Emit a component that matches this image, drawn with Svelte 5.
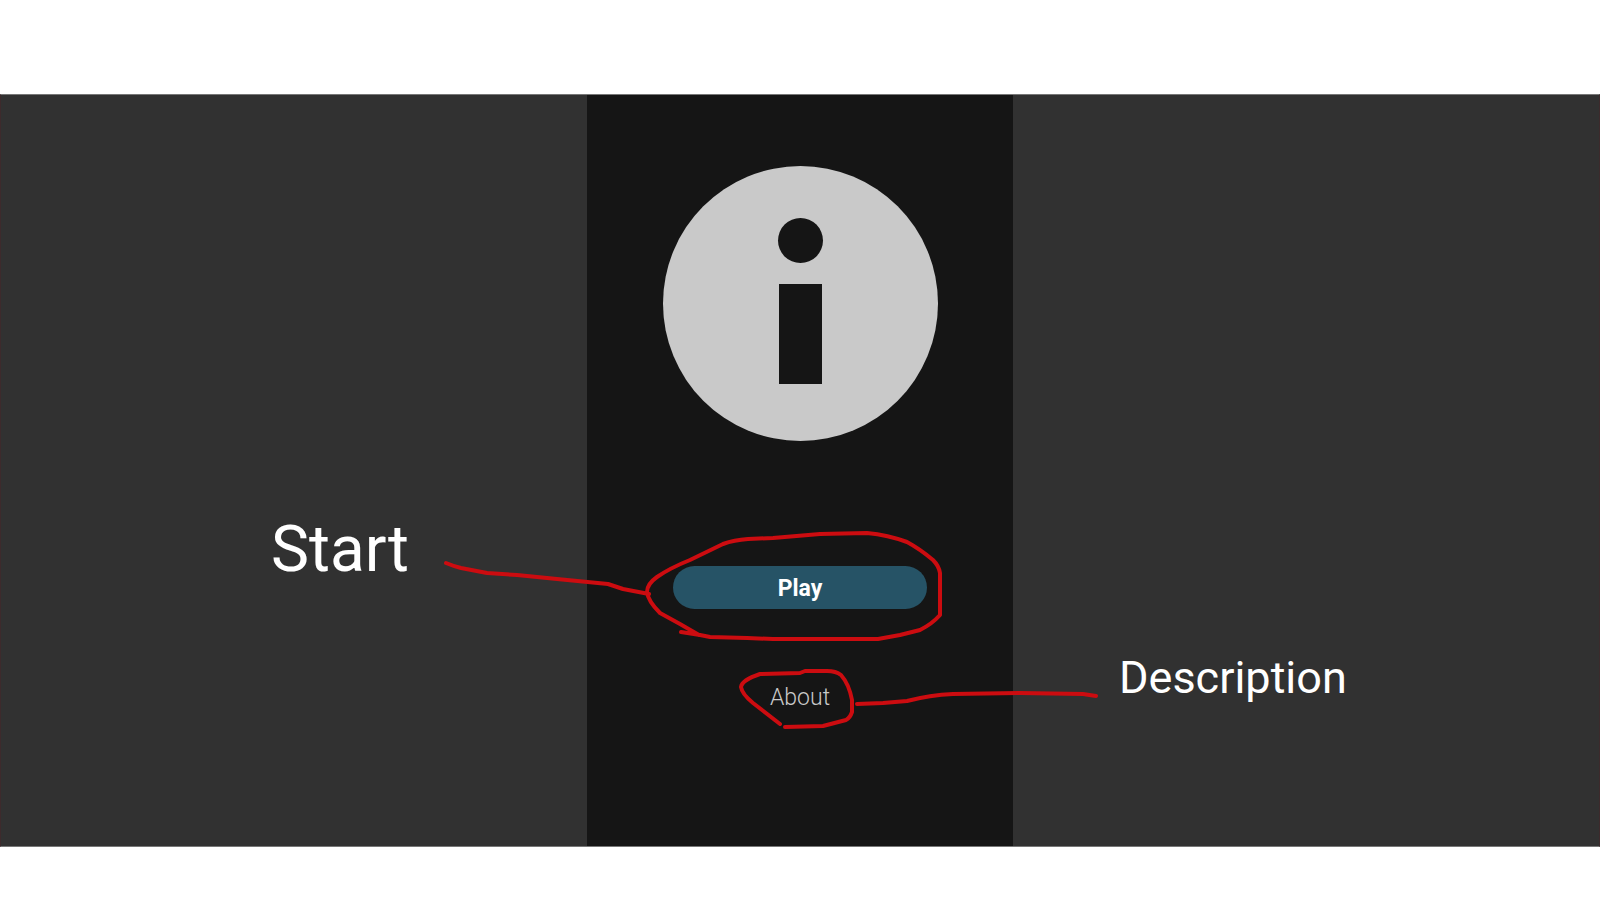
<script lang="ts">
  // freehand pen strokes, drawn over the middle panel
  const strokes = [
    // Start -> Play
    'M446 563 Q453 566 461 568 L487 573 L517 575 L557 579 L608 584 L623 589 L649 594',
    'M681 632 L700 635 L710 637 L747 638 L773 639 L878 639 L900 635 L920 630 Q932 624 940 615 L940 600 L940 573 Q939 566 933 560 Q920 549 907 542 Q888 535 867 533 L820 534 L773 538 L748 539 Q734 540 723 544 L690 560 Q670 568 657 577 Q647 584 647 592 Q648 601 660 613 L680 624 L699 635',
    // About -> Description
    'M780 724 L753 703 Q742 694 741 687 Q742 680 760 674 L800 673 L805 671 L827 671 Q836 671 841 675 Q849 684 852 700 L852 712 Q850 718 846 720 L823 726 L785 727',
    'M857 704 L883 703 L907 701 Q930 695 953 694 L1020 693 L1083 694 L1096 696'
  ];
</script>

<main class="stage">
  <div class="side left">
    <p class="note start">Start</p>
  </div>

  <section class="panel">
    <svg class="logo" viewBox="0 0 275 275" role="img" aria-label="Info">
      <circle class="disc" cx="137.5" cy="137.5" r="137.5" />
      <circle class="ink" cx="137.5" cy="74.5" r="22.5" />
      <rect class="ink" x="116" y="118" width="43" height="100" />
    </svg>
    <button class="play" type="button">Play</button>
    <button class="about" type="button">About</button>

    <svg class="strokes" viewBox="587 95 426 751" aria-hidden="true">
      {#each strokes as d}
        <path {d} />
      {/each}
    </svg>
  </section>

  <div class="side right">
    <p class="note description">Description</p>
  </div>
</main>

<style>
  :global(body) {
    margin: 0;
    background: #fff;
  }

  .stage {
    display: grid;
    grid-template-columns: 1fr 426px 1fr;
    margin: 94px 0 53px;
    border: 1px solid #3d2a2c;
    border-top-color: #777;
    border-bottom-color: #777;
    background: #313131;
    font-family: Roboto, "Liberation Sans", sans-serif;
  }

  .side {
    display: flex;
    align-items: flex-start;
  }

  .left {
    justify-content: flex-end;
    padding: 419px 178px 0 0;
  }

  .right {
    padding: 557px 0 0 106px;
  }

  .note {
    margin: 0;
    color: #fff;
  }

  .start {
    font-size: 64px;
    line-height: 72px;
  }

  .description {
    font-size: 45px;
    line-height: 52px;
  }

  .panel {
    position: relative;
    display: flex;
    flex-direction: column;
    align-items: center;
    padding: 71px 0 134px;
    background: #151515;
  }

  .logo {
    display: block;
    width: 275px;
    height: 275px;
  }

  .disc {
    fill: #c9c9c9;
  }

  .ink {
    fill: #151515;
  }

  .play {
    width: 254px;
    height: 43px;
    margin-top: 125px;
    padding: 2px 0 0;
    border: none;
    border-radius: 22px;
    background: #265366;
    color: #fff;
    font: bold 23px/28px Roboto, sans-serif;
    cursor: pointer;
  }

  .about {
    margin-top: 75px;
    padding: 0;
    border: none;
    background: none;
    color: #c9c9c9;
    font: 300 23px/28px Roboto, sans-serif;
    cursor: pointer;
  }

  /* lies over the buttons and runs out past both panel edges */
  .strokes {
    position: absolute;
    top: 0;
    left: 0;
    width: 426px;
    height: 751px;
    overflow: visible;
    pointer-events: none;
  }

  .strokes path {
    fill: none;
    stroke: #cc0c10;
    stroke-width: 4;
    stroke-linecap: round;
    stroke-linejoin: round;
  }
</style>
